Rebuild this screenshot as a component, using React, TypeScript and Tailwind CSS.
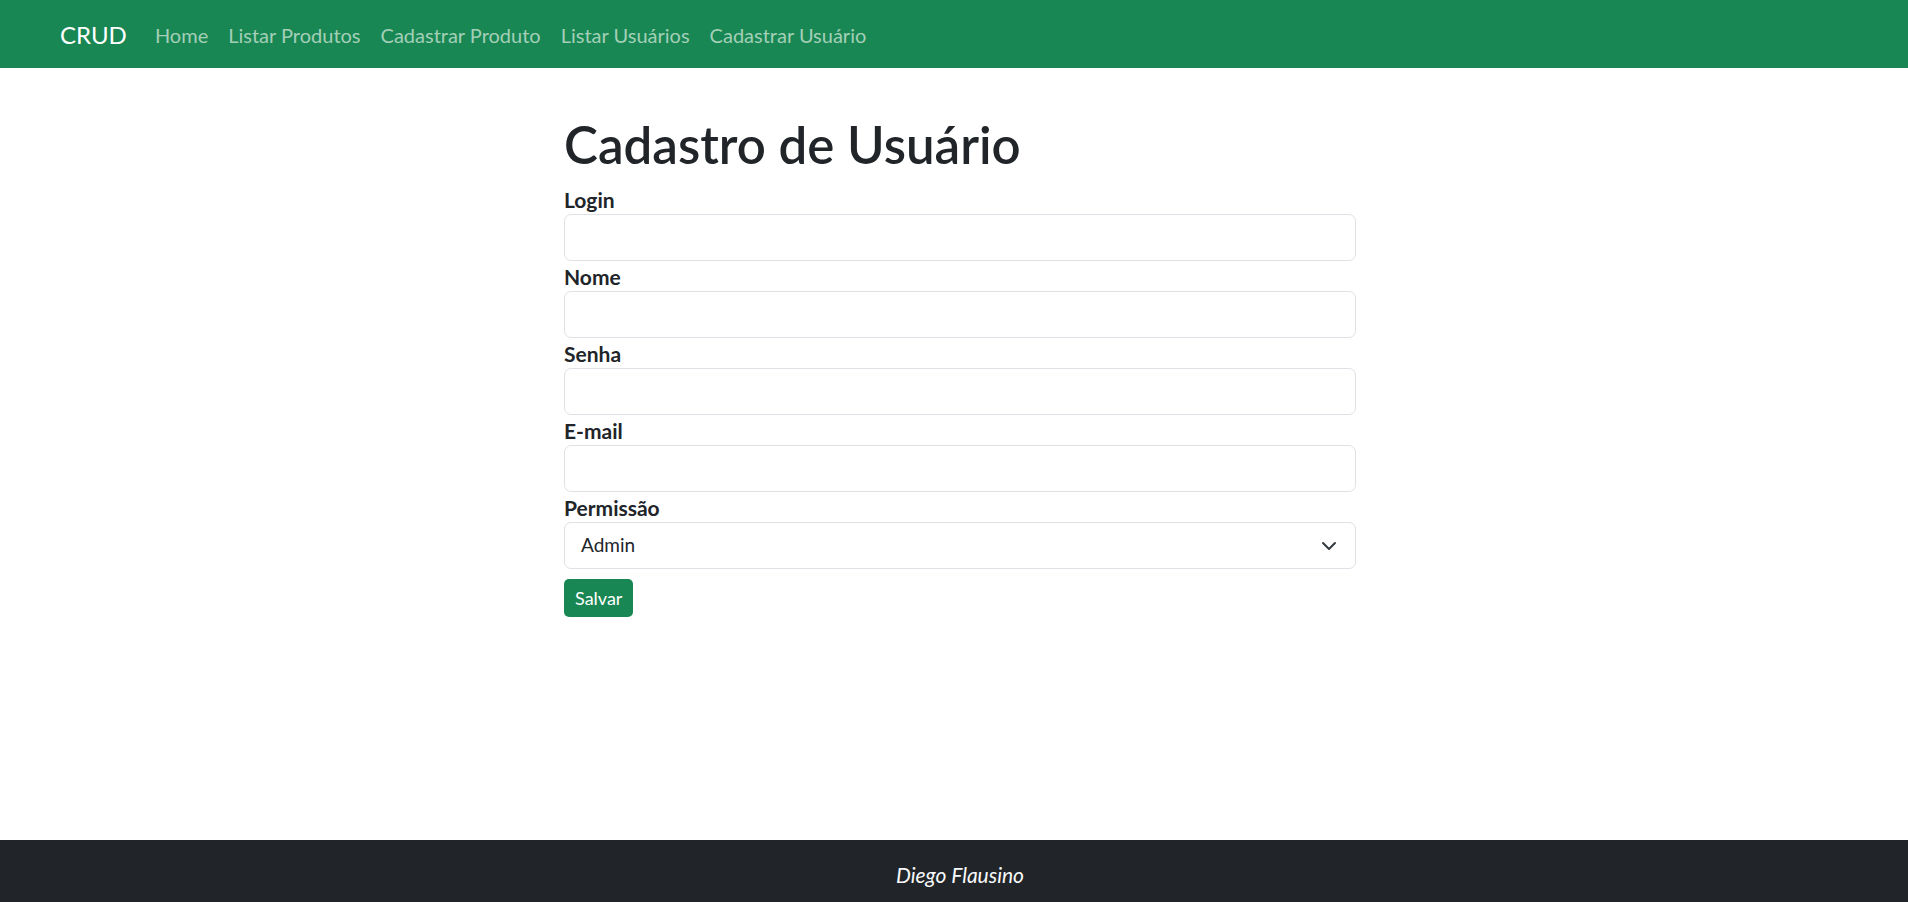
import React from "react";

const font = { fontFamily: "Lato, 'Noto Sans', 'Liberation Sans', sans-serif" };

function Label({ children }: { children: React.ReactNode }) {
  return (
    <label className="h-[30px] flex items-center text-[21px] font-bold text-[#212529] leading-none">{children}</label>
  );
}

function Field({ label }: { label: string }) {
  return (
    <div className="flex flex-col">
      <Label>{label}</Label>
      <input className="h-[47px] w-full rounded-[7px] border border-[#dee2e6] bg-white px-4 text-[19px] outline-none" />
    </div>
  );
}

export default function App() {
  return (
    <div className="min-h-screen flex flex-col bg-white" style={font}>
      <nav className="h-[68px] bg-[#198754] flex items-center pl-[60px] pt-[2px] shrink-0">
        <span className="text-white text-[24px] mr-[28px]">CRUD</span>
        <div className="flex items-center gap-[20px] text-[20px] text-[#a3cfb7]">
          <span>Home</span>
          <span>Listar Produtos</span>
          <span>Cadastrar Produto</span>
          <span>Listar Usuários</span>
          <span>Cadastrar Usuário</span>
        </div>
      </nav>
      <main className="flex-1 flex justify-center">
        <div className="w-[792px] pt-[48px] translate-x-[6px]">
          <h1 className="text-[51px] font-semibold leading-[58px] text-[#212529] mb-[10px]">Cadastro de Usuário</h1>
          <Field label="Login" />
          <Field label="Nome" />
          <Field label="Senha" />
          <Field label="E-mail" />
          <div className="flex flex-col">
            <Label>Permissão</Label>
            <div className="h-[47px] w-full rounded-[7px] border border-[#dee2e6] bg-white pl-[16px] pr-[18px] flex items-center justify-between text-[19px] text-[#212529]">
              <span>Admin</span>
              <svg width="16" height="16" viewBox="0 0 16 16" fill="none">
                <path d="M2 5l6 6 6-6" stroke="#343a40" strokeWidth="2" strokeLinecap="round" strokeLinejoin="round" />
              </svg>
            </div>
          </div>
          <button className="mt-[10px] h-[38px] px-[11px] rounded-[5px] bg-[#198754] text-white text-[18px]">Salvar</button>
        </div>
      </main>
      <footer className="h-[62px] bg-[#212529] flex items-start justify-center pt-[22px] shrink-0">
        <span className="italic text-[21px] leading-[26px] text-[#f8f9fa] translate-x-[6px]">Diego Flausino</span>
      </footer>
    </div>
  );
}
